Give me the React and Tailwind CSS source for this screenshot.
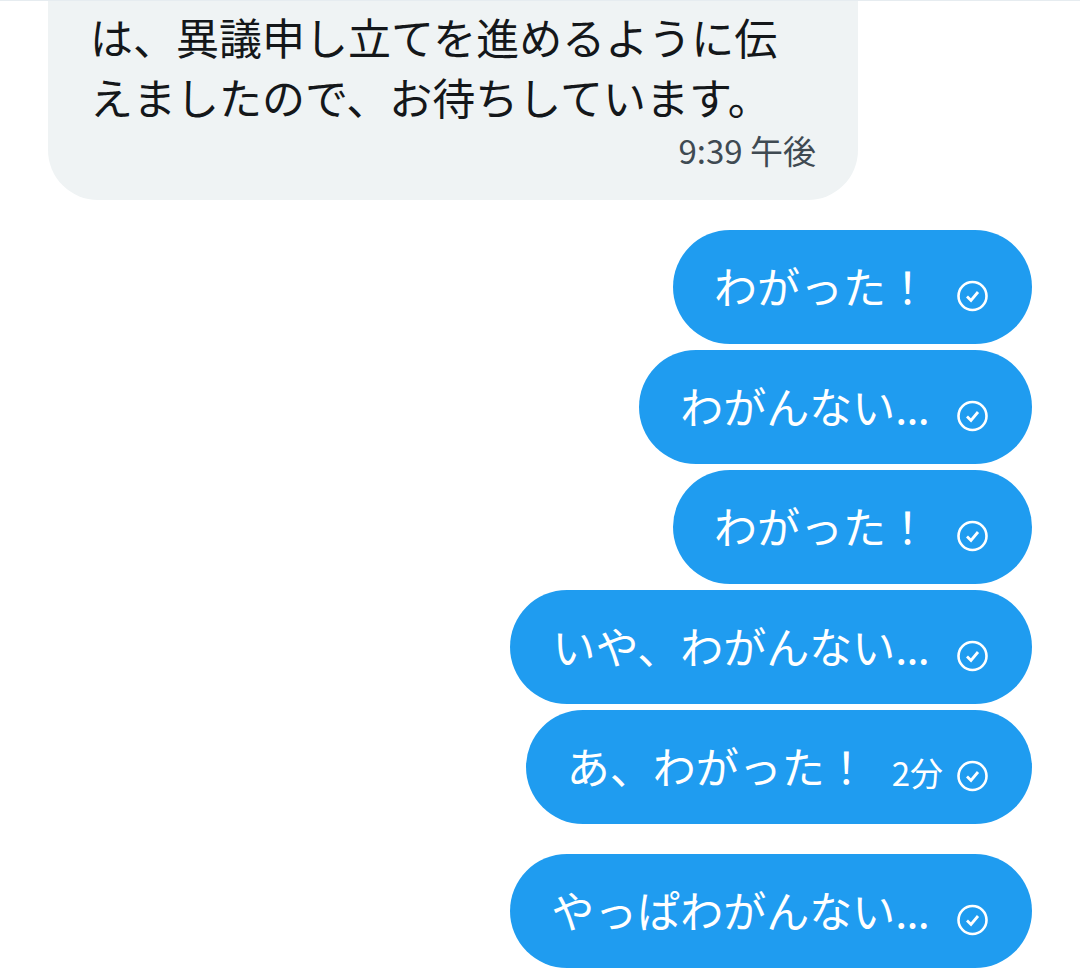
import React from 'react';

const messages = [
  { text: 'わがった！', pad: 'pl-[41px]' },
  { text: 'わがんない', dots: true, pad: 'pl-[41px]' },
  { text: 'わがった！', pad: 'pl-[41px]' },
  { text: 'いや、わがんない', dots: true, pad: 'pl-[43px]' },
  { text: 'あ、わがった！', time: '2分', pad: 'pl-[41px]' },
  { text: 'やっぱわがんない', dots: true, pad: 'pl-[41px]' },
];

const ReadIcon = () => (
  <svg width="32" height="32" viewBox="0 0 32 32" fill="none" stroke="currentColor" className="ml-[28px] mt-[18px] shrink-0">
    <circle cx="15.5" cy="16" r="14" strokeWidth="2.6" />
    <path d="M10 16.5l4 4 7-8.5" strokeWidth="2.8" />
  </svg>
);

const Bubble = ({ text, dots, time, pad, last }) => (
  <div className={`self-end flex items-center h-[114px] rounded-[57px] bg-[#1f9cf0] pr-[43px] text-white ${pad} ${last ? 'mt-[30px]' : 'mt-[6px]'}`}>
    <span className="-mt-[4px] text-[43px] leading-none whitespace-nowrap">
      {text}
      {dots && <span className="tracking-[-0.7px]">...</span>}
    </span>
    {time && <span className="ml-[24px] mt-[10px] -mr-[14px] text-[33px] leading-none whitespace-nowrap">{time}</span>}
    <ReadIcon />
  </div>
);

const App = () => {
  return (
    <div className="w-[1080px] h-[976px] overflow-hidden bg-white border-t border-[#e6ecf0] font-['Noto_Sans_CJK_JP','Noto_Sans',sans-serif] flex flex-col">
      <div className="ml-[48px] w-[810px] h-[199px] shrink-0 rounded-b-[50px] bg-[#eff3f4] pl-[42px] pr-[42px] pt-[5px] text-[#14171a]">
        <p className="text-[43px] leading-[60px] whitespace-nowrap">は、異議申し立てを進めるように伝</p>
        <p className="text-[43px] leading-[60px] whitespace-nowrap">えましたので、お待ちしています。</p>
        <p className="text-[33px] leading-[40px] mt-[4px] text-right text-[#3f4a52]">9:39 午後</p>
      </div>
      <div className="flex flex-col pr-[48px] pt-[24px]">
        {messages.map((m, i) => (
          <Bubble key={i} {...m} last={i === messages.length - 1} />
        ))}
      </div>
    </div>
  );
};

export default App;
